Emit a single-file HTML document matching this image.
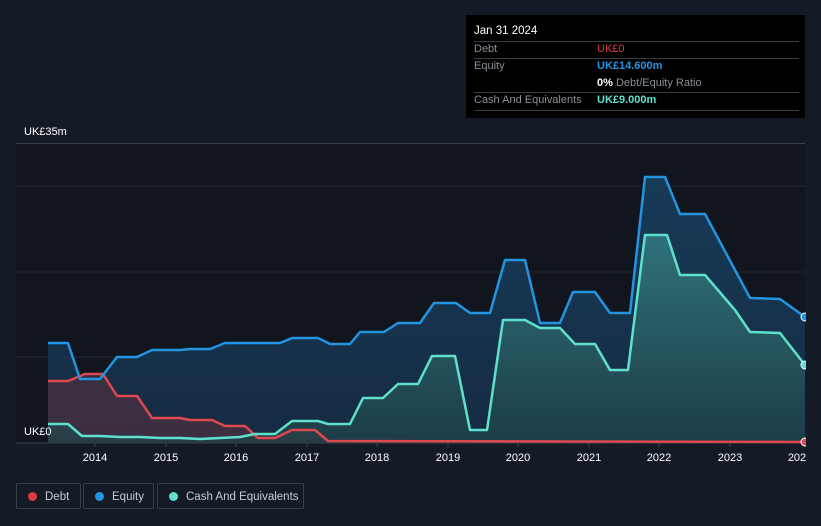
<!DOCTYPE html>
<html><head><meta charset="utf-8"><style>
body{margin:0;width:821px;height:526px;background:#151b26;font-family:"Liberation Sans",sans-serif;overflow:hidden;position:relative}
.tt{position:absolute;left:466px;top:15px;width:339px;height:103px;background:#000;font-size:11px;color:#8a8f97}
.tt .r{position:absolute;left:8px;right:6px;border-bottom:1px solid #3a3d44}
.lg{position:absolute;top:483px;height:26px;border:1px solid #3a3f4a;border-radius:2px;color:#c8ccd2;font-size:11.5px;line-height:26px;box-sizing:border-box}
.lg i{display:inline-block;width:9px;height:9px;border-radius:50%;margin:0 8px 0 11px;vertical-align:-1px}
</style></head><body>
<svg width="821" height="526" style="position:absolute;left:0;top:0">
<defs>
<linearGradient id="ce" x1="0" y1="0" x2="0" y2="1"><stop offset="0" stop-color="#1a4a70" stop-opacity=".7"/><stop offset="1" stop-color="#16304a" stop-opacity=".8"/></linearGradient>
<linearGradient id="cc" x1="0" y1="0" x2="0" y2="1"><stop offset="0" stop-color="#3a8a8a" stop-opacity=".7"/><stop offset="1" stop-color="#1f4448" stop-opacity=".7"/></linearGradient>
</defs>
<rect x="16" y="143" width="789" height="300" fill="#11151d"/>
<line x1="16" y1="143.5" x2="805" y2="143.5" stroke="#3d424b"/>
<line x1="16" y1="186" x2="805" y2="186" stroke="#23272f"/>
<line x1="16" y1="272" x2="805" y2="272" stroke="#23272f"/>
<line x1="16" y1="357" x2="805" y2="357" stroke="#23272f"/>
<line x1="16" y1="443" x2="805" y2="443" stroke="#3d424b"/>
<g stroke="#3d424b"><line x1="95" y1="443" x2="95" y2="447"/><line x1="166" y1="443" x2="166" y2="447"/><line x1="236" y1="443" x2="236" y2="447"/><line x1="307" y1="443" x2="307" y2="447"/><line x1="377" y1="443" x2="377" y2="447"/><line x1="448" y1="443" x2="448" y2="447"/><line x1="518" y1="443" x2="518" y2="447"/><line x1="589" y1="443" x2="589" y2="447"/><line x1="659" y1="443" x2="659" y2="447"/><line x1="730" y1="443" x2="730" y2="447"/></g>
<path d="M48,343 L68,343 L80,379 L100,379 L117,357 L137,357 L152,350 L180,350 L190,349 L210,349 L225,343 L280,343 L292,338 L318,338 L330,344 L350,344 L360,332 L384,332 L398,323 L420,323 L434,303 L456,303 L470,313 L490,313 L505,260 L525,260 L540,323 L560,323 L573,292 L595,292 L610,313 L630,313 L645,177 L665,177 L680,214 L705,214 L735,270 L750,298 L780,299 L805,317 L805,443 L48,443Z" fill="url(#ce)"/>
<path d="M48,381 L68,381 L85,374 L103,374 L117,396 L137,396 L152,418 L180,418 L190,420 L212,420 L225,426 L245,426 L258,438 L275,438 L292,430 L315,430 L328,441 L805,442 L805,443 L48,443Z" fill="#4a3040" opacity=".75"/>
<path d="M48,424 L68,424 L82,436 L100,436 L120,437 L140,437 L160,438 L180,438 L200,439 L220,438 L240,437 L255,434 L275,434 L292,421 L318,421 L328,424 L350,424 L363,398 L383,398 L398,384 L418,384 L432,356 L455,356 L470,430 L487,430 L503,320 L525,320 L540,328 L560,328 L575,344 L595,344 L610,370 L628,370 L645,235 L667,235 L680,275 L705,275 L735,310 L750,332 L780,333 L805,365 L805,443 L48,443Z" fill="url(#cc)"/>
<g fill="none" stroke-width="2.5" stroke-linejoin="round">
<path d="M48,381 L68,381 L85,374 L103,374 L117,396 L137,396 L152,418 L180,418 L190,420 L212,420 L225,426 L245,426 L258,438 L275,438 L292,430 L315,430 L328,441 L805,442" stroke="#e0484f"/>
<path d="M48,343 L68,343 L80,379 L100,379 L117,357 L137,357 L152,350 L180,350 L190,349 L210,349 L225,343 L280,343 L292,338 L318,338 L330,344 L350,344 L360,332 L384,332 L398,323 L420,323 L434,303 L456,303 L470,313 L490,313 L505,260 L525,260 L540,323 L560,323 L573,292 L595,292 L610,313 L630,313 L645,177 L665,177 L680,214 L705,214 L735,270 L750,298 L780,299 L805,317" stroke="#2394e0"/>
<path d="M48,424 L68,424 L82,436 L100,436 L120,437 L140,437 L160,438 L180,438 L200,439 L220,438 L240,437 L255,434 L275,434 L292,421 L318,421 L328,424 L350,424 L363,398 L383,398 L398,384 L418,384 L432,356 L455,356 L470,430 L487,430 L503,320 L525,320 L540,328 L560,328 L575,344 L595,344 L610,370 L628,370 L645,235 L667,235 L680,275 L705,275 L735,310 L750,332 L780,333 L805,365" stroke="#5ee0cc"/>
</g>
<circle cx="805" cy="317" r="4" fill="#2394e0" stroke="#fff" stroke-width="1"/>
<circle cx="805" cy="365" r="4" fill="#5ee0cc" stroke="#fff" stroke-width="1"/>
<circle cx="805" cy="442" r="4" fill="#e0484f" stroke="#fff" stroke-width="1"/>
<rect x="806" y="140" width="15" height="320" fill="#151b26"/>
<g fill="#fff" font-size="11" font-family="Liberation Sans, sans-serif" text-anchor="middle">
<text x="95" y="461">2014</text><text x="166" y="461">2015</text><text x="236" y="461">2016</text><text x="307" y="461">2017</text><text x="377" y="461">2018</text><text x="448" y="461">2019</text><text x="518" y="461">2020</text><text x="589" y="461">2021</text><text x="659" y="461">2022</text><text x="730" y="461">2023</text><text x="797" y="461">202</text>
<text x="24" y="135" text-anchor="start">UK£35m</text>
<text x="24" y="435" text-anchor="start">UK£0</text>
</g>
</svg>
<div class="tt">
<div style="position:absolute;left:8px;top:10px;color:#fff;font-size:11.5px">Jan 31 2024</div>
<div class="r" style="top:26px;height:0"></div>
<div style="position:absolute;left:8px;top:28px">Debt</div><div style="position:absolute;left:131px;top:28px;color:#e0393f">UK£0</div>
<div class="r" style="top:43px;height:0"></div>
<div style="position:absolute;left:8px;top:45px">Equity</div><div style="position:absolute;left:131px;top:45px;color:#2394e0;font-weight:bold">UK£14.600m</div>
<div style="position:absolute;left:131px;top:62px"><b style="color:#fff">0%</b> Debt/Equity Ratio</div>
<div class="r" style="top:77px;height:0"></div>
<div style="position:absolute;left:8px;top:79px">Cash And Equivalents</div><div style="position:absolute;left:131px;top:79px;color:#5ee0cc;font-weight:bold">UK£9.000m</div>
<div class="r" style="top:95px;height:0"></div>
</div>
<div class="lg" style="left:16px;width:65px"><i style="background:#e0393f"></i>Debt</div>
<div class="lg" style="left:83px;width:71px"><i style="background:#2394e0"></i>Equity</div>
<div class="lg" style="left:157px;width:147px"><i style="background:#5ee0cc"></i>Cash And Equivalents</div>
</body></html>
